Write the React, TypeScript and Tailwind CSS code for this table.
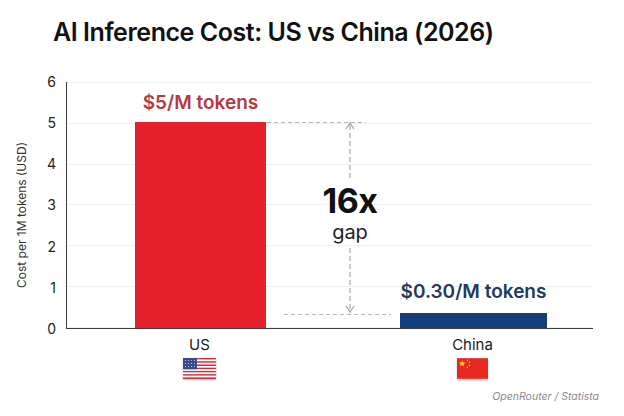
import React from "react";

function USFlag() {
  const stripes = Array.from({ length: 13 }, (_, i) => i);
  return (
    <svg width="33" height="21" viewBox="0 0 33 21" className="shadow-[0_1px_2px_rgba(0,0,0,0.25)]">
      {stripes.map((i) => (
        <rect key={i} x="0" y={(i * 21) / 13} width="33" height={21 / 13} fill={i % 2 === 0 ? "#c8323f" : "#ffffff"} />
      ))}
      <rect x="0" y="0" width="14" height={(21 / 13) * 7} fill="#3a4a8c" />
      {[2.5, 5.5, 8.5].map((y) =>
        [2.5, 5.5, 8.5, 11.5].map((x) => <circle key={`${x}-${y}`} cx={x} cy={y} r="0.5" fill="#dfe3f0" />)
      )}
    </svg>
  );
}

function CNFlag() {
  return (
    <svg width="31" height="21" viewBox="0 0 30 20" className="shadow-[0_1px_2px_rgba(0,0,0,0.25)]">
      <rect width="30" height="20" fill="#e42a1e" />
      <polygon
        points="5,2 5.9,4.3 8.3,4.3 6.4,5.8 7.1,8.1 5,6.7 2.9,8.1 3.6,5.8 1.7,4.3 4.1,4.3"
        fill="#f7d324"
      />
      <circle cx="10" cy="2" r="0.7" fill="#f7d324" />
      <circle cx="12" cy="4" r="0.7" fill="#f7d324" />
      <circle cx="12" cy="7" r="0.7" fill="#f7d324" />
      <circle cx="10" cy="9" r="0.7" fill="#f7d324" />
    </svg>
  );
}

export default function App() {
  const ticks = ["6", "5", "4", "3", "2", "1", "0"];
  return (
    <div
      className="w-[624px] h-[416px] bg-white flex flex-col overflow-hidden text-[#1a1a1a]"
      style={{ fontFamily: "Inter, 'Noto Sans', sans-serif" }}
    >
      <div className="h-[64px] flex items-center justify-start pl-[53px]">
        <h1 className="text-[25px] font-semibold tracking-[-0.45px] text-[#111] leading-none whitespace-nowrap">
          AI Inference Cost: US vs China (2026)
        </h1>
      </div>

      <div className="mt-[18px] flex flex-row h-[247px]">
        <div className="w-[44px] flex items-center justify-center">
          <span className="-rotate-90 whitespace-nowrap text-[12px] text-[#333] mt-[19px]">
            Cost per 1M tokens (USD)
          </span>
        </div>
        <div className="w-[12px] mr-[10px] h-[263px] -my-[8px] flex flex-col justify-between">
          {ticks.map((t) => (
            <div key={t} className="h-4 leading-4 text-[14px] text-right text-[#222]">
              {t}
            </div>
          ))}
        </div>

        <div className="relative w-[527px] h-[247px] border-l-[1.5px] border-b-[1.5px] border-[#3a3a3a]">
          <div className="absolute inset-0 flex flex-col justify-between">
            {ticks.map((t) => (
              <div key={t} className="h-px bg-[#f1f1f1]" />
            ))}
          </div>

          <div className="relative h-full flex flex-row items-end pl-[68px] gap-[134px]">
            <div className="w-[131px] flex flex-col items-center">
              <div className="whitespace-nowrap text-[19px] font-semibold text-[#b43a40] leading-[22px] mb-[8px]">
                $5/M tokens
              </div>
              <div className="w-full h-[206px] bg-[#e6212b]" />
            </div>
            <div className="w-[147px] flex flex-col items-center">
              <div className="whitespace-nowrap text-[19px] font-semibold text-[#1f3a5c] leading-[22px] mb-[10px]">
                $0.30/M tokens
              </div>
              <div className="w-full h-[15px] bg-[#143d7b]" />
            </div>
          </div>

          <svg className="absolute inset-0" width="527" height="247" viewBox="0 0 527 247">
            <line x1="200" y1="40.5" x2="299" y2="40.5" stroke="#b5b5b5" strokeWidth="1" strokeDasharray="4 3" />
            <line x1="217" y1="232.5" x2="324" y2="232.5" stroke="#b5b5b5" strokeWidth="1" strokeDasharray="4 3" />
            <line x1="283" y1="43" x2="283" y2="98" stroke="#a8a8a8" strokeWidth="1.2" strokeDasharray="5 3" />
            <line x1="283" y1="166" x2="283" y2="229" stroke="#a8a8a8" strokeWidth="1.2" strokeDasharray="5 3" />
            <polyline points="279,47 283,41 287,47" fill="none" stroke="#a8a8a8" strokeWidth="1.3" />
            <polyline points="279,224 283,230 287,224" fill="none" stroke="#a8a8a8" strokeWidth="1.3" />
          </svg>

          <div className="absolute left-[243px] top-[102px] w-[80px] flex flex-col items-center">
            <div className="text-[34px] font-bold leading-[34px] text-[#111] tracking-[-0.5px]">16x</div>
            <div className="text-[20px] leading-[22px] text-[#222] mt-[3px]">gap</div>
          </div>
        </div>
      </div>

      <div className="flex flex-row pl-[134px] gap-[134px] mt-[7px]">
        <div className="w-[131px] flex flex-col items-center">
          <div className="text-[15px] leading-[18px] text-[#1a1a1a]">US</div>
          <div className="mt-[4px] flex">
            <USFlag />
          </div>
        </div>
        <div className="w-[147px] flex flex-col items-center">
          <div className="text-[15px] leading-[18px] text-[#1a1a1a]">China</div>
          <div className="mt-[4px] flex">
            <CNFlag />
          </div>
        </div>
      </div>

      <div className="mt-[10px] pr-[25px] flex justify-end">
        <span className="italic text-[10.5px] leading-4 text-[#8a8a8a]">OpenRouter / Statista</span>
      </div>
    </div>
  );
}
